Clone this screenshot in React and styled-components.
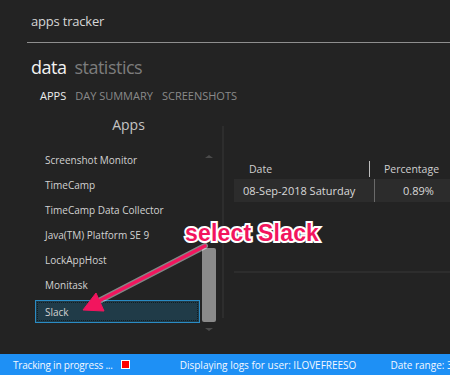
import React from "react";
import styled, { createGlobalStyle } from "styled-components";

const Global = createGlobalStyle`
  html, body { margin: 0; padding: 0; background: #232323; overflow: hidden; }
  body { font-family: "Open Sans", "Noto Sans", sans-serif; }
`;

const Page = styled.div`
  position: relative;
  width: 450px;
  height: 375px;
  display: flex;
  flex-direction: column;
  background: #232323;
  overflow: hidden;
`;

const TitleBar = styled.div`
  height: 42px;
  padding-left: 31px;
  display: flex;
  align-items: center;
  font-size: 13px;
  letter-spacing: -0.2px;
  color: #d6d6d6;
  box-sizing: border-box;
`;

const Rule = styled.div`
  margin-left: 27px;
  height: 1px;
  background: #8e8e8e;
`;

const Heading = styled.div`
  margin-top: 11px;
  padding-left: 31px;
  display: flex;
  gap: 8px;
  align-items: baseline;
  font-size: 18px;
  letter-spacing: -0.5px;
  line-height: 26px;
`;

const HeadWord = styled.span`
  color: ${(p) => (p.$active ? "#f2f2f2" : "#7c7c7c")};
`;

const Tabs = styled.div`
  margin-top: 8px;
  padding-left: 40px;
  display: flex;
  gap: 9px;
  font-size: 11px;
  line-height: 16px;
`;

const Tab = styled.span`
  color: ${(p) => (p.$active ? "#ececec" : "#8a8a8a")};
`;

const Body = styled.div`
  flex: 1;
  display: flex;
  margin-top: 11px;
  min-height: 0;
`;

const AppsPanel = styled.div`
  width: 187px;
  flex-shrink: 0;
  margin-left: 35px;
  display: flex;
  flex-direction: column;
`;

const PanelTitle = styled.div`
  text-align: center;
  font-size: 14px;
  line-height: 20px;
  color: #c4c4c4;
`;

const ListArea = styled.div`
  display: flex;
  margin-top: 12px;
`;

const List = styled.div`
  width: 165px;
  display: flex;
  flex-direction: column;
`;

const Item = styled.div`
  height: ${(p) => (p.$selected ? "23px" : "25px")};
  margin-top: ${(p) => (p.$selected ? "3px" : "0")};
  display: flex;
  align-items: center;
  box-sizing: border-box;
  font-size: 10px;
  color: #d2d2d2;
  background: ${(p) => (p.$selected ? "#203b48" : "transparent")};
  border: ${(p) => (p.$selected ? "1px solid #2a8bc4" : "none")};
  outline: ${(p) => (p.$selected ? "1px dotted #0f1d24" : "none")};
  outline-offset: -3px;
  padding-left: ${(p) => (p.$selected ? "9px" : "10px")};
`;

const ScrollBar = styled.div`
  width: 15px;
  height: 187px;
  margin-left: 1px;
  display: flex;
  flex-direction: column;
  align-items: center;
`;

const Arrow = styled.div`
  width: 0;
  height: 0;
  border-left: 4px solid transparent;
  border-right: 4px solid transparent;
  margin-top: ${(p) => (p.$down ? "0" : "8px")};
  margin-bottom: ${(p) => (p.$down ? "3px" : "0")};
  ${(p) =>
    p.$down
      ? "border-top: 3px solid #4a4a4a;"
      : "border-bottom: 3px solid #4a4a4a;"}
`;

const Track = styled.div`
  flex: 1;
  width: 14px;
  display: flex;
  flex-direction: column;
  justify-content: flex-end;
  padding-bottom: 6px;
`;

const Thumb = styled.div`
  height: 74px;
  width: 14px;
  border-radius: 2px;
  background: #8a8a8a;
`;

const VDivider = styled.div`
  width: 2px;
  flex-shrink: 0;
  background: #2d2d2d;
  margin-top: 11px;
  height: 192px;
`;

const TablePanel = styled.div`
  flex: 1;
  min-width: 0;
  margin-left: 10px;
  padding-top: 44px;
  display: flex;
  flex-direction: column;
`;

const HeaderRow = styled.div`
  display: flex;
  height: 19px;
  align-items: center;
  font-size: 10.5px;
  color: #cfcfcf;
`;

const HeaderCell = styled.div`
  width: ${(p) => p.$w}px;
  flex-shrink: 0;
  padding-left: ${(p) => p.$pl}px;
  box-sizing: border-box;
  white-space: nowrap;
`;

const HeaderSep = styled.div`
  width: 1px;
  flex-shrink: 0;
  height: 16px;
  background: #bdbdbd;
  margin-right: 14px;
`;

const DataRow = styled.div`
  display: flex;
  margin-top: 1px;
  height: 23px;
  background: #2c2c2c;
  font-size: 11px;
  color: #d8d8d8;
  align-items: stretch;
`;

const DataCell = styled.div`
  width: ${(p) => p.$w}px;
  flex-shrink: 0;
  padding-left: ${(p) => p.$pl}px;
  box-sizing: border-box;
  display: flex;
  align-items: center;
  white-space: nowrap;
`;

const RowSep = styled.div`
  width: 1px;
  flex-shrink: 0;
  background: #6a6a6a;
`;

const HLine = styled.div`
  margin-top: 69px;
  height: 2px;
  background: #2d2d2d;
`;

const StatusBar = styled.div`
  height: 21px;
  flex-shrink: 0;
  background: #1e90f5;
  display: flex;
  align-items: center;
  font-size: 10px;
  color: #f4f8ff;
  white-space: nowrap;
  padding-left: 13px;
  overflow: hidden;
`;

const StatusText = styled.span`
  margin-left: ${(p) => p.$ml || 0}px;
  display: inline-flex;
  align-items: center;
  letter-spacing: ${(p) => p.$ls || 0}px;
`;

const RedBox = styled.span`
  display: inline-block;
  width: 7px;
  height: 7px;
  background: #ff0000;
  border: 1px solid #ffffff;
  margin-left: 8px;
`;

const Annotation = styled.div`
  position: absolute;
  left: 185px;
  top: 220px;
  font-family: "Liberation Sans", Arial, sans-serif;
  font-weight: bold;
  font-size: 23px;
  color: #f2155e;
  -webkit-text-stroke: 4px #ffffff;
  paint-order: stroke fill;
  letter-spacing: 0.2px;
  white-space: nowrap;
`;

const ArrowSvg = styled.svg`
  position: absolute;
  left: 0;
  top: 0;
  pointer-events: none;
`;

const apps = [
  "Screenshot Monitor",
  "TimeCamp",
  "TimeCamp Data Collector",
  "Java(TM) Platform SE 9",
  "LockAppHost",
  "Monitask",
];

export default function App() {
  return (
    <>
      <Global />
      <Page>
        <TitleBar>apps tracker</TitleBar>
        <Rule />
        <Heading>
          <HeadWord $active>data</HeadWord>
          <HeadWord>statistics</HeadWord>
        </Heading>
        <Tabs>
          <Tab $active>APPS</Tab>
          <Tab>DAY SUMMARY</Tab>
          <Tab>SCREENSHOTS</Tab>
        </Tabs>
        <Body>
          <AppsPanel>
            <PanelTitle>Apps</PanelTitle>
            <ListArea>
              <List>
                {apps.map((a) => (
                  <Item key={a}>{a}</Item>
                ))}
                <Item $selected>Slack</Item>
              </List>
              <ScrollBar>
                <Arrow />
                <Track>
                  <Thumb />
                </Track>
                <Arrow $down />
              </ScrollBar>
            </ListArea>
          </AppsPanel>
          <VDivider />
          <TablePanel>
            <HeaderRow>
              <HeaderCell $w={135} $pl={15}>Date</HeaderCell>
              <HeaderSep />
              <HeaderCell $w={70} $pl={0}>Percentage</HeaderCell>
            </HeaderRow>
            <DataRow>
              <DataCell $w={140} $pl={9}>08-Sep-2018 Saturday</DataCell>
              <RowSep />
              <DataCell $w={75} $pl={28}>0.89%</DataCell>
            </DataRow>
            <HLine />
          </TablePanel>
        </Body>
        <StatusBar>
          <StatusText $ls={-0.2}>
            Tracking in progress ...
            <RedBox />
          </StatusText>
          <StatusText $ml={50}>Displaying logs for user: ILOVEFREESO</StatusText>
          <StatusText $ml={34}>Date range: 3</StatusText>
        </StatusBar>
        <ArrowSvg width="450" height="375" viewBox="0 0 450 375">
          <line x1="205" y1="246" x2="95" y2="303" stroke="#ffffff" strokeOpacity="0.45" strokeWidth="6" strokeLinecap="round" />
          <line x1="205" y1="246" x2="95" y2="303" stroke="#f2155e" strokeWidth="3.5" strokeLinecap="round" />
          <polygon points="83,310 96,293 104,311" fill="#f2155e" stroke="#f2155e" strokeWidth="1" strokeLinejoin="round" />
        </ArrowSvg>
        <Annotation>select Slack</Annotation>
      </Page>
    </>
  );
}
